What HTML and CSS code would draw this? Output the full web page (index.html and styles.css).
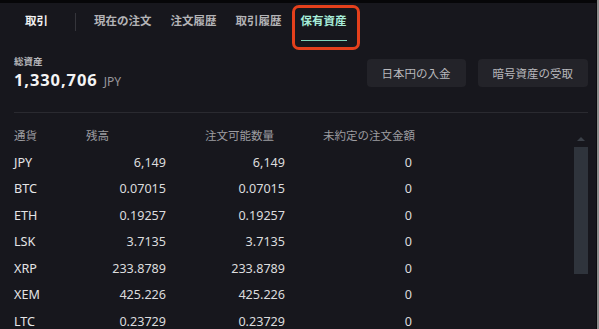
FILE: index.html
```html
<!DOCTYPE html>
<html lang="ja">
<head>
  <meta charset="UTF-8">
  <meta name="viewport" content="width=device-width, initial-scale=1.0">
  <title>保有資産</title>
  <link rel="stylesheet" href="styles.css">
</head>
<body>
  <div class="app">
    <nav class="tabs">
      <span class="tab tab-main">取引</span>
      <span class="tab-sep"></span>
      <span class="tab">現在の注文</span>
      <span class="tab">注文履歴</span>
      <span class="tab">取引履歴</span>
      <span class="tab tab-active">保有資産</span>
    </nav>
    <div class="highlight"></div>

    <section class="summary">
      <div class="total">
        <div class="total-label">総資産</div>
        <div class="total-value">1,330,706 <span class="unit">JPY</span></div>
      </div>
      <div class="actions">
        <button class="btn">日本円の入金</button>
        <button class="btn">暗号資産の受取</button>
      </div>
    </section>

    <section class="balances">
      <div class="grid">
        <div class="th">通貨</div>
        <div class="th">残高</div>
        <div class="th th-3">注文可能数量</div>
        <div class="th th-4">未約定の注文金額</div>

        <div class="cur">JPY</div><div class="num">6,149</div><div class="num">6,149</div><div class="num">0</div>
        <div class="cur">BTC</div><div class="num">0.07015</div><div class="num">0.07015</div><div class="num">0</div>
        <div class="cur">ETH</div><div class="num">0.19257</div><div class="num">0.19257</div><div class="num">0</div>
        <div class="cur">LSK</div><div class="num">3.7135</div><div class="num">3.7135</div><div class="num">0</div>
        <div class="cur">XRP</div><div class="num">233.8789</div><div class="num">233.8789</div><div class="num">0</div>
        <div class="cur">XEM</div><div class="num">425.226</div><div class="num">425.226</div><div class="num">0</div>
        <div class="cur">LTC</div><div class="num">0.23729</div><div class="num">0.23729</div><div class="num">0</div>
      </div>
      <div class="scrollbar">
        <span class="scroll-arrow"></span>
        <span class="scroll-thumb"></span>
      </div>
    </section>
  </div>
</body>
</html>
```

FILE: styles.css
```css
html, body {
  margin: 0;
  padding: 0;
  height: 100%;
}
body {
  background: #8e8e8e;
  font-family: "Noto Sans", "Noto Sans CJK JP", sans-serif;
  overflow: hidden;
}
.app {
  position: relative;
  width: 597px;
  height: 329px;
  box-sizing: border-box;
  background: #17171d;
  border-top: 3px solid #060608;
  border-right: 1px solid #0c0c0f;
  overflow: hidden;
}

/* tabs */
.tabs {
  display: flex;
  align-items: center;
  gap: 19px;
  padding-left: 25px;
  height: 38px;
}
.tab {
  font-size: 11.5px;
  font-weight: bold;
  color: #b3b3b6;
  line-height: 16px;
  padding: 10px 0 11px;
  border-bottom: 1px solid transparent;
  white-space: nowrap;
}
.tab-main {
  color: #f2f2f2;
}
.tab-sep {
  width: 1px;
  height: 18px;
  margin: 0 0 0 8px;
  background: #35353b;
}
.tab-sep + .tab {
  margin-left: -1px;
}
.tab-active {
  color: #a6ecd8;
  border-bottom-color: #7fd6bd;
}
.highlight {
  position: absolute;
  left: 292px;
  top: 2px;
  width: 68px;
  height: 45px;
  box-sizing: border-box;
  border: 3px solid #e5401c;
  border-radius: 7px;
}

/* summary */
.summary {
  display: flex;
  justify-content: space-between;
  align-items: flex-start;
  margin: 0 8px 0 14px;
  padding: 14px 0 19px;
  border-bottom: 1px solid #2a2a30;
}
.total-label {
  font-size: 9.5px;
  font-weight: bold;
  line-height: 14px;
  color: #b4b4b8;
}
.total-value {
  font-size: 16.5px;
  font-weight: bold;
  line-height: 22px;
  letter-spacing: 0.9px;
  color: #f4f4f4;
}
.unit {
  font-size: 12px;
  font-weight: normal;
  letter-spacing: 0;
  color: #98989c;
  margin-left: 1px;
}
.actions {
  display: flex;
  gap: 12px;
  margin-top: 4px;
}
.btn {
  height: 28px;
  padding: 0 15px;
  border: none;
  border-radius: 4px;
  background: #232329;
  color: #b8b8bc;
  font-family: "Noto Sans", "Noto Sans CJK JP", sans-serif;
  font-size: 11.5px;
}

/* balances */
.balances {
  display: flex;
  margin: 0 8px 0 14px;
  padding-top: 10px;
}
.grid {
  flex: 1;
  display: grid;
  grid-template-columns: 72px 80px 119px 127px;
  grid-auto-rows: 26.5px;
  align-content: start;
}
.th {
  font-size: 11.5px;
  line-height: 26px;
  height: 26px;
  color: #9c9ca0;
  white-space: nowrap;
}
.th-3 {
  padding-left: 39px;
}
.th-4 {
  padding-left: 38px;
}
.cur, .num {
  font-size: 12.6px;
  line-height: 26.5px;
  color: #e4e4e6;
}
.num {
  text-align: right;
  color: #dcdcde;
}
.scrollbar {
  width: 14px;
  display: flex;
  flex-direction: column;
  align-items: center;
}
.scroll-arrow {
  margin-top: 14px;
  width: 0;
  height: 0;
  border-left: 4px solid transparent;
  border-right: 4px solid transparent;
  border-bottom: 4px solid #3b4048;
}
.scroll-thumb {
  margin-top: 6px;
  width: 14px;
  height: 127px;
  background: #2f343c;
}
```
